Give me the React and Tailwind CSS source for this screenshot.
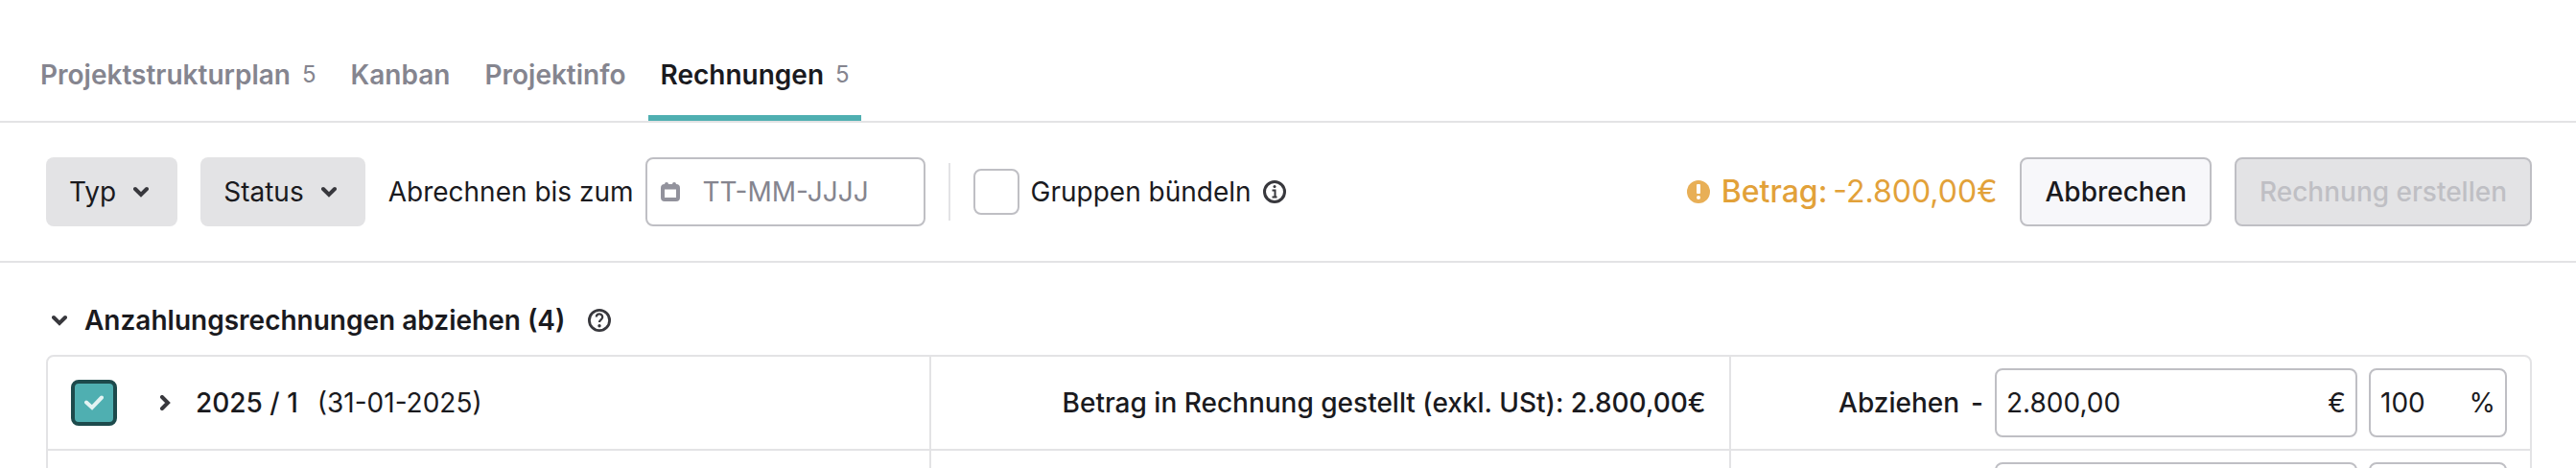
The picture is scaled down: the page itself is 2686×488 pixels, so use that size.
import React, { useState } from "react";

const TABS = [
  { id: "wbs", label: "Projektstrukturplan", count: 5 },
  { id: "kanban", label: "Kanban" },
  { id: "info", label: "Projektinfo" },
  { id: "invoices", label: "Rechnungen", count: 5 },
];

const DEPOSITS = [{ id: 1, number: "2025 / 1", date: "31-01-2025", amount: "2.800,00", percent: "100" }];

const Chevron = ({ className = "" }) => (
  <svg viewBox="0 0 16 12" className={`h-3 w-4 shrink-0 ${className}`} fill="none" aria-hidden="true">
    <path d="M2 3L8 9L14 3" stroke="#38383d" strokeWidth="4" strokeLinecap="round" />
  </svg>
);

const CalendarIcon = () => (
  <svg viewBox="0 0 20 20" className="h-5 w-5 shrink-0" aria-hidden="true">
    <path
      fill="#92929c"
      fillRule="evenodd"
      d="M6 0a2 2 0 0 1 2 2h4a2 2 0 0 1 4 0a4 4 0 0 1 4 4v10a4 4 0 0 1-4 4H4a4 4 0 0 1-4-4V6a4 4 0 0 1 4-4a2 2 0 0 1 2-2zM4 7.5v8.5h12V7.5z"
    />
  </svg>
);

const InfoIcon = () => (
  <svg viewBox="0 0 24 24" className="h-6 w-6" fill="none" aria-hidden="true">
    <circle cx="12" cy="12" r="10.5" stroke="#38383d" strokeWidth="3" />
    <circle cx="12" cy="6.5" r="1.5" fill="#38383d" />
    <path d="M9.5 10.5h3v7M9.5 17.5h5" stroke="#38383d" strokeWidth="2" />
  </svg>
);

const HelpIcon = () => (
  <svg viewBox="0 0 24 24" className="h-6 w-6" fill="none" aria-hidden="true">
    <circle cx="12" cy="12" r="10.6" stroke="#38383d" strokeWidth="2.8" />
    <path d="M8.8 8.6a3.2 3.2 0 1 1 5 2.6c-1.1.8-1.8 1.2-1.8 2.8" stroke="#38383d" strokeWidth="2.3" />
    <circle cx="12" cy="17.8" r="1.7" fill="#38383d" />
  </svg>
);

const AlertIcon = () => (
  <svg viewBox="0 0 24 24" className="h-6 w-6 shrink-0" aria-hidden="true">
    <circle cx="12" cy="12" r="12" fill="#e8af56" />
    <rect x="10" y="4" width="4" height="10" rx="1" fill="#fff" />
    <circle cx="12" cy="18" r="2" fill="#fff" />
  </svg>
);

const Checkbox = ({ id, checked, onChange, label }) => (
  <span className="relative inline-flex h-12 w-12 shrink-0 items-center justify-center">
    <input
      id={id}
      type="checkbox"
      aria-label={label}
      checked={checked}
      onChange={onChange}
      className="h-12 w-12 appearance-none rounded-lg border-2 border-[#bfbfc4] bg-white checked:border-4 checked:border-[#1d4a4c] checked:bg-[#4fafb1]"
    />
    {checked && (
      <svg viewBox="0 0 20 16" className="pointer-events-none absolute h-4 w-5" fill="none" aria-hidden="true">
        <path d="M2 7.5L8 13L18 2.5" stroke="#e4f3f3" strokeWidth="4" strokeLinecap="round" />
      </svg>
    )}
  </span>
);

const UnitInput = ({ label, value, unit, className }) => (
  <label className={`flex h-[72px] items-center rounded-lg border-2 border-[#bfbfc4] bg-white px-2.5 ${className}`}>
    <input aria-label={label} defaultValue={value} className="w-full min-w-0 flex-1 outline-none" />
    <span>{unit}</span>
  </label>
);

const DepositRow = ({ deposit }) => {
  const [checked, setChecked] = useState(true);

  return (
    <tr>
      <td className="w-[35.6%] border-r-2 border-b-2 border-[#e3e3e5] px-6 py-3">
        <div className="flex items-center">
          <Checkbox label={`Rechnung ${deposit.number}`} checked={checked} onChange={() => setChecked(!checked)} />
          <button type="button" aria-label="Details anzeigen" className="ml-8 flex h-9 w-9 items-center justify-center">
            <Chevron className="-rotate-90" />
          </button>
          <span className="ml-3.5 font-medium">{deposit.number}</span>
          <span className="ml-5">({deposit.date})</span>
        </div>
      </td>
      <td className="border-r-2 border-b-2 border-[#e3e3e5] px-6 py-3 text-right font-medium">
        Betrag in Rechnung gestellt (exkl. USt): {deposit.amount}€
      </td>
      <td className="border-b-2 border-[#e3e3e5] px-6 py-3">
        <div className="flex items-center justify-end gap-3">
          <span className="font-medium">Abziehen</span>
          <span className="font-medium">-</span>
          <UnitInput label="Betrag" value={deposit.amount} unit="€" className="w-[378px]" />
          <UnitInput label="Prozent" value={deposit.percent} unit="%" className="w-36" />
        </div>
      </td>
    </tr>
  );
};

// Row without data yet, only the fields are there
const EmptyRow = () => (
  <tr>
    <td className="border-r-2 border-[#e3e3e5] px-6 py-3" />
    <td className="border-r-2 border-[#e3e3e5] px-6 py-3" />
    <td className="px-6 py-3">
      <div className="flex items-center justify-end gap-3">
        <UnitInput label="Betrag" className="w-[378px]" />
        <UnitInput label="Prozent" className="w-36" />
      </div>
    </td>
  </tr>
);

const FilterButton = ({ children }) => (
  <button type="button" className="flex h-[72px] items-center gap-3 rounded-lg bg-[#e3e3e5] px-6">
    {children}
    <Chevron className="mx-1.5" />
  </button>
);

const App = () => {
  const [activeTab, setActiveTab] = useState("invoices");
  const [grouped, setGrouped] = useState(false);
  const [open, setOpen] = useState(true);

  return (
    <div className="h-screen overflow-hidden bg-white font-[Inter,sans-serif] text-[28px] leading-9 text-[#1a1a1e]">
      <nav className="flex gap-3 border-b-2 border-[#e3e3e5] px-[30px] pt-8">
        {TABS.map((tab) => (
          <button
            key={tab.id}
            type="button"
            onClick={() => setActiveTab(tab.id)}
            className={`flex h-[94px] items-center gap-3 border-b-6 px-3 pt-1 font-semibold ${
              tab.id === activeTab ? "border-[#4fafb1]" : "border-transparent text-[#85858f]"
            }`}
          >
            {tab.label}
            {tab.count && <span className="text-2xl font-normal text-[#85858f]">{tab.count}</span>}
          </button>
        ))}
      </nav>

      <div className="flex items-center justify-between border-b-2 border-[#e3e3e5] py-9 pr-[46px] pl-12">
        <div className="flex items-center gap-6">
          <FilterButton>Typ</FilterButton>
          <FilterButton>Status</FilterButton>
          <div className="flex items-center gap-3">
            <label htmlFor="until">Abrechnen bis zum</label>
            <div className="flex h-[72px] w-[292px] items-center gap-6 rounded-lg border-2 border-[#bfbfc4] px-3.5">
              <CalendarIcon />
              <input id="until" placeholder="TT-MM-JJJJ" className="w-full min-w-0 outline-none placeholder:text-[#85858f]" />
            </div>
          </div>
          <div className="h-15 w-0.5 bg-[#e3e3e5]" />
          <div className="flex items-center gap-3">
            <Checkbox id="group" checked={grouped} onChange={() => setGrouped(!grouped)} />
            <label htmlFor="group">Gruppen bündeln</label>
            <button type="button" aria-label="Info">
              <InfoIcon />
            </button>
          </div>
        </div>

        <div className="flex items-center gap-6">
          <div className="flex items-center gap-3 text-[32px] text-[#e2a139]">
            <AlertIcon />
            <p className="flex gap-1.5">
              <span className="font-medium">Betrag:</span>
              <span>-2.800,00€</span>
            </p>
          </div>
          <button type="button" className="h-[72px] rounded-lg border-2 border-[#bfbfc4] bg-[#f7f7fa] px-6 font-medium">
            Abbrechen
          </button>
          <button
            type="button"
            disabled
            className="h-[72px] rounded-lg border-2 border-[#bfbfc4] bg-[#e3e3e5] px-6 font-medium text-[#bfbfc4]"
          >
            Rechnung erstellen
          </button>
        </div>
      </div>

      <section className="pt-[42px] pr-[46px] pl-12">
        <div className="mb-[18px] flex items-center gap-6">
          <button type="button" onClick={() => setOpen(!open)} className="flex items-center gap-4.5 pl-1.5 font-semibold">
            <Chevron />
            Anzahlungsrechnungen abziehen (4)
          </button>
          <button type="button" aria-label="Hilfe">
            <HelpIcon />
          </button>
        </div>

        {open && (
          <div className="rounded-lg border-2 border-[#e3e3e5]">
            <table className="w-full table-fixed border-separate border-spacing-0">
              <tbody>
                {DEPOSITS.map((deposit) => (
                  <DepositRow key={deposit.id} deposit={deposit} />
                ))}
                <EmptyRow />
              </tbody>
            </table>
          </div>
        )}
      </section>
    </div>
  );
};

export default App;
